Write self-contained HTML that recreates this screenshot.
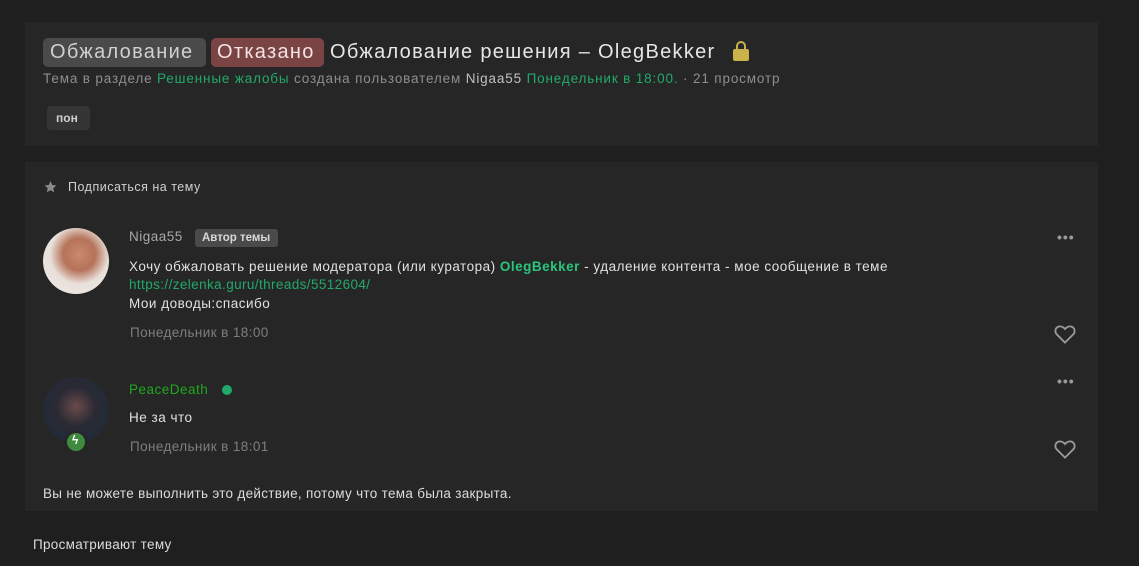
<!DOCTYPE html>
<html><head><meta charset="utf-8"><style>
*{margin:0;padding:0;box-sizing:border-box}
body{width:1139px;height:566px;background:#1f1f1f;font-family:"Liberation Sans","Noto Sans CJK SC",sans-serif;color:#d6d6d6;position:relative;overflow:hidden}
.a{position:absolute;white-space:nowrap}
.p{position:absolute;background:#262626}
.g{color:#22a96a}
.t{display:inline-block;vertical-align:top;height:29px;line-height:29px;border-radius:5px;padding:0 7px;margin-right:5px}
</style></head><body>
<div class="p" style="left:25px;top:22px;width:1073px;height:124px"></div>
<div class="p" style="left:25px;top:162px;width:1073px;height:349px"></div>

<div class="a" style="left:43px;top:38px;font-size:20px;letter-spacing:1.3px">
<span class="t" style="background:#4a4a4a;color:#d0d0d0;width:163px">Обжалование</span><span class="t" style="background:#7a4444;color:#f3e3e3;width:113px;padding:0 6px">Отказано</span><span class="t" style="padding:0 1px;color:#e6e6e6">Обжалование решения – OlegBekker</span>
</div>
<div class="a" style="left:733px;top:41px;width:16px;height:20px">
 <div style="position:absolute;left:3px;top:0;width:10px;height:11px;border:2.5px solid #c9b24a;border-bottom:none;border-radius:5px 5px 0 0"></div>
 <div style="position:absolute;left:0;top:8px;width:16px;height:12px;background:#c9b24a;border-radius:2px"></div>
</div>
<div class="a" style="left:43px;top:71px;font-size:13.5px;color:#8e8e8e;letter-spacing:0.85px">Тема в разделе <span class="g">Решенные жалобы</span> создана пользователем <span style="color:#c0c0c0">Nigaa55</span> <span class="g">Понедельник в 18:00.</span> · 21 просмотр</div>
<div class="a" style="left:47px;top:106px;width:43px;height:24px;background:#353535;border-radius:4px"></div>
<div class="a" style="left:56px;top:111px;font-size:12px;font-weight:bold;color:#cfcfcf">пон</div>

<svg class="a" style="left:43px;top:180px" width="15" height="14" viewBox="0 0 24 24"><path d="M12 2l3 6.5 7 .8-5.2 4.8 1.5 7L12 17.5 5.7 21.1l1.5-7L2 9.3l7-.8z" fill="#8a8a8a"/></svg>
<div class="a" style="left:68px;top:180px;font-size:12.5px;color:#d0d0d0;letter-spacing:0.5px">Подписаться на тему</div>

<div class="a" style="left:43px;top:228px;width:66px;height:66px;border-radius:50%;background:radial-gradient(circle at 55% 40%,#c98a6e 0,#b5735a 30%,#e8e0da 55%,#f0ece8 100%)"></div>
<div class="a" style="left:129px;top:229px;font-size:13.5px;color:#a8a8a8;letter-spacing:0.5px">Nigaa55</div>
<div class="a" style="left:195px;top:229px;width:83px;height:18px;background:#4a4a4a;border-radius:3px"></div>
<div class="a" style="left:202px;top:232px;font-size:11.5px;font-weight:bold;color:#d8d8d8">Автор темы</div>
<div class="a" style="left:129px;top:259px;font-size:13.5px;color:#e0e0e0;letter-spacing:0.5px">Хочу обжаловать решение модератора (или куратора) <b class="g" style="color:#2bc47a">OlegBekker</b> - удаление контента - мое сообщение в теме</div>
<div class="a" style="left:129px;top:277px;font-size:13.5px;letter-spacing:0.4px"><span class="g">https://zelenka.guru/threads/5512604/</span></div>
<div class="a" style="left:129px;top:296px;font-size:13.5px;color:#e0e0e0;letter-spacing:0.5px">Мои доводы:спасибо</div>
<div class="a" style="left:130px;top:325px;font-size:13.5px;color:#7e7e7e;letter-spacing:0.4px">Понедельник в 18:00</div>
<div class="a" style="left:1057px;top:229px;font-size:14px;color:#9a9a9a;letter-spacing:1px;font-weight:bold">•••</div>
<svg class="a" style="left:1054px;top:324px" width="22" height="20" viewBox="0 0 24 22"><path d="M12 20.5L3 11.5C0.5 9 1 4.5 4.5 3c2.6-1.1 5.5.2 7.5 2.5C14 3.2 16.9 1.9 19.5 3c3.5 1.5 4 6 1.5 8.5z" fill="none" stroke="#9a9a9a" stroke-width="2"/></svg>

<div class="a" style="left:43px;top:377px;width:66px;height:66px;border-radius:50%;background:radial-gradient(circle at 50% 45%,#6a4a4a 0,#2a2a34 40%,#1a2a3a 100%)"></div>
<div class="a" style="left:65px;top:431px;width:22px;height:22px;border-radius:50%;background:#3f8a3f;border:2px solid #262626"></div>
<div class="a" style="left:72px;top:433px;font-size:12px;color:#fff;font-weight:bold">ϟ</div>
<div class="a" style="left:129px;top:382px;font-size:13.5px;color:#1ea81e;letter-spacing:0.5px">PeaceDeath</div>
<div class="a" style="left:222px;top:385px;width:10px;height:10px;border-radius:50%;background:#22a96a"></div>
<div class="a" style="left:129px;top:410px;font-size:13.5px;color:#e0e0e0;letter-spacing:0.5px">Не за что</div>
<div class="a" style="left:130px;top:439px;font-size:13.5px;color:#7e7e7e;letter-spacing:0.4px">Понедельник в 18:01</div>
<div class="a" style="left:1057px;top:373px;font-size:14px;color:#9a9a9a;letter-spacing:1px;font-weight:bold">•••</div>
<svg class="a" style="left:1054px;top:439px" width="22" height="20" viewBox="0 0 24 22"><path d="M12 20.5L3 11.5C0.5 9 1 4.5 4.5 3c2.6-1.1 5.5.2 7.5 2.5C14 3.2 16.9 1.9 19.5 3c3.5 1.5 4 6 1.5 8.5z" fill="none" stroke="#9a9a9a" stroke-width="2"/></svg>

<div class="a" style="left:43px;top:486px;font-size:13.5px;color:#dcdcdc;letter-spacing:0.3px">Вы не можете выполнить это действие, потому что тема была закрыта.</div>
<div class="a" style="left:33px;top:537px;font-size:13.5px;color:#dcdcdc;letter-spacing:0.3px">Просматривают тему</div>
</body></html>
